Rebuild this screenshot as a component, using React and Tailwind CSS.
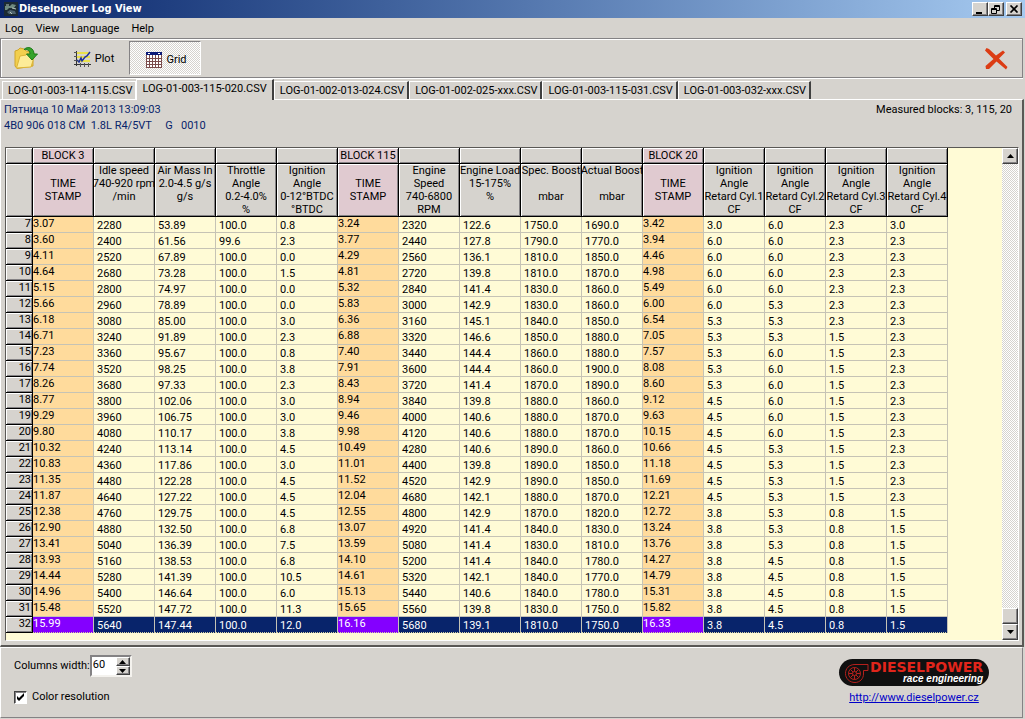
import { useState } from "react";
import clsx from "clsx";

const menuItems = ["Log", "View", "Language", "Help"];

const files = [
  "LOG-01-003-114-115.CSV",
  "LOG-01-003-115-020.CSV",
  "LOG-01-002-013-024.CSV",
  "LOG-01-002-025-xxx.CSV",
  "LOG-01-003-115-031.CSV",
  "LOG-01-003-032-xxx.CSV",
];

const columns = [
  { block: "BLOCK 3", lines: ["", "TIME", "STAMP", ""], stamp: true },
  { lines: ["Idle speed", "740-920 rpm", "/min", ""] },
  { lines: ["Air Mass In", "2.0-4.5 g/s", "g/s", ""] },
  { lines: ["Throttle", "Angle", "0.2-4.0%", "%"] },
  { lines: ["Ignition", "Angle", "0-12°BTDC", "°BTDC"] },
  { block: "BLOCK 115", lines: ["", "TIME", "STAMP", ""], stamp: true },
  { lines: ["Engine", "Speed", "740-6800", "RPM"] },
  { lines: ["Engine Load", "15-175%", "%", ""] },
  { lines: ["Spec. Boost", "", "mbar", ""] },
  { lines: ["Actual Boost", "", "mbar", ""] },
  { block: "BLOCK 20", lines: ["", "TIME", "STAMP", ""], stamp: true },
  { lines: ["Ignition", "Angle", "Retard Cyl.1", "CF"] },
  { lines: ["Ignition", "Angle", "Retard Cyl.2", "CF"] },
  { lines: ["Ignition", "Angle", "Retard Cyl.3", "CF"] },
  { lines: ["Ignition", "Angle", "Retard Cyl.4", "CF"] },
];

const FIRST_ROW = 7;
const SELECTED_ROW = 32;

const rows = `
3.07 2280 53.89 100.0 0.8 3.24 2320 122.6 1750.0 1690.0 3.42 3.0 6.0 2.3 3.0
3.60 2400 61.56 99.6 2.3 3.77 2440 127.8 1790.0 1770.0 3.94 6.0 6.0 2.3 2.3
4.11 2520 67.89 100.0 0.0 4.29 2560 136.1 1810.0 1850.0 4.46 6.0 6.0 2.3 2.3
4.64 2680 73.28 100.0 1.5 4.81 2720 139.8 1810.0 1870.0 4.98 6.0 6.0 2.3 2.3
5.15 2800 74.97 100.0 0.0 5.32 2840 141.4 1830.0 1860.0 5.49 6.0 6.0 2.3 2.3
5.66 2960 78.89 100.0 0.0 5.83 3000 142.9 1830.0 1860.0 6.00 6.0 5.3 2.3 2.3
6.18 3080 85.00 100.0 3.0 6.36 3160 145.1 1840.0 1850.0 6.54 5.3 5.3 2.3 2.3
6.71 3240 91.89 100.0 2.3 6.88 3320 146.6 1850.0 1880.0 7.05 5.3 5.3 1.5 2.3
7.23 3360 95.67 100.0 0.8 7.40 3440 144.4 1860.0 1880.0 7.57 5.3 6.0 1.5 2.3
7.74 3520 98.25 100.0 3.8 7.91 3600 144.4 1860.0 1900.0 8.08 5.3 6.0 1.5 2.3
8.26 3680 97.33 100.0 2.3 8.43 3720 141.4 1870.0 1890.0 8.60 5.3 6.0 1.5 2.3
8.77 3800 102.06 100.0 3.0 8.94 3840 139.8 1880.0 1860.0 9.12 4.5 6.0 1.5 2.3
9.29 3960 106.75 100.0 3.0 9.46 4000 140.6 1880.0 1870.0 9.63 4.5 6.0 1.5 2.3
9.80 4080 110.17 100.0 3.8 9.98 4120 140.6 1880.0 1870.0 10.15 4.5 6.0 1.5 2.3
10.32 4240 113.14 100.0 4.5 10.49 4280 140.6 1890.0 1860.0 10.66 4.5 5.3 1.5 2.3
10.83 4360 117.86 100.0 3.0 11.01 4400 139.8 1890.0 1850.0 11.18 4.5 5.3 1.5 2.3
11.35 4480 122.28 100.0 4.5 11.52 4520 142.9 1890.0 1850.0 11.69 4.5 5.3 1.5 2.3
11.87 4640 127.22 100.0 4.5 12.04 4680 142.1 1880.0 1870.0 12.21 4.5 5.3 1.5 2.3
12.38 4760 129.75 100.0 4.5 12.55 4800 142.9 1870.0 1820.0 12.72 3.8 5.3 0.8 1.5
12.90 4880 132.50 100.0 6.8 13.07 4920 141.4 1840.0 1830.0 13.24 3.8 5.3 0.8 1.5
13.41 5040 136.39 100.0 7.5 13.59 5080 141.4 1830.0 1810.0 13.76 3.8 5.3 0.8 1.5
13.93 5160 138.53 100.0 6.8 14.10 5200 141.4 1840.0 1780.0 14.27 3.8 4.5 0.8 1.5
14.44 5280 141.39 100.0 10.5 14.61 5320 142.1 1840.0 1770.0 14.79 3.8 4.5 0.8 1.5
14.96 5400 146.64 100.0 6.0 15.13 5440 140.6 1840.0 1780.0 15.31 3.8 4.5 0.8 1.5
15.48 5520 147.72 100.0 11.3 15.65 5560 139.8 1830.0 1750.0 15.82 3.8 4.5 0.8 1.5
15.99 5640 147.44 100.0 12.0 16.16 5680 139.1 1810.0 1750.0 16.33 3.8 4.5 0.8 1.5
`
  .trim()
  .split("\n")
  .map((line) => line.split(" "));

const raised =
  "border border-t-white border-l-white border-r-[#404040] border-b-[#404040] bg-[#d6d3ce] shadow-[inset_-1px_-1px_0_#848284]";

const headCell =
  "overflow-hidden border-r border-b border-black p-0 font-normal shadow-[inset_1px_1px_0_#fff,inset_-1px_-1px_0_#848284]";

const dither =
  "bg-[image:repeating-conic-gradient(#ffffff_0_25%,#d6d3ce_0_50%)] bg-[length:2px_2px]";

function AppIcon() {
  return (
    <svg width="14" height="14" viewBox="0 0 14 14" aria-hidden="true">
      <rect width="14" height="14" fill="#1c2b33" />
      <path d="M1 4h5l2-2 4 1-2 3H5L3 8H1z" fill="#6f8a80" />
      <path d="M3 10l3-2 5 1 1 3H5z" fill="#4e6470" />
      <path d="M2 3h3M8 6l4 1M6 10l2 2" stroke="#b6c8bd" />
    </svg>
  );
}

function FolderIcon() {
  return (
    <svg width="25" height="24" viewBox="0 0 25 24" aria-hidden="true">
      <path d="M2 5l3-1 2-2 4 1 2 2 7 1v14L4 22.500 2 20z" fill="#f2cf4e" stroke="#cfa52c" />
      <path d="M3.500 22L7 10l6-1 2-2 7 1-4 13z" fill="#fdec98" stroke="#dcb436" />
      <path d="M11 3.500C15-.5 21 2 21 8h3.500l-5.500 6-5.500-6H17c0-3-2-5-6-4.500z" fill="#35a32a" stroke="#1d7a1a" />
    </svg>
  );
}

function PlotIcon() {
  return (
    <svg width="17" height="16" viewBox="0 0 17 16" aria-hidden="true">
      <path d="M3 2h13M3 6h13M3 10h13" stroke="#e9e04a" strokeWidth="2" />
      <path d="M2.500 0v15M0 13.500h17" stroke="#333" />
      <path d="M0 1.500h3M0 5.500h3M0 9.500h3M6.500 12v4M10.500 12v4M14.500 12v4" stroke="#555" />
      <path d="M3 9l2 2 2-4 1 3 3-4 2-1 3-4" fill="none" stroke="#1c2f9c" strokeWidth="1.500" />
    </svg>
  );
}

function GridIcon() {
  return (
    <svg width="16" height="16" viewBox="0 0 16 16" aria-hidden="true">
      <rect width="16" height="16" fill="#fff" />
      <path
        d="M.5 3v13M3.500 3v13M6.500 3v13M9.500 3v13M12.500 3v13M15.500 3v13M0 6.500h16M0 9.500h16M0 12.500h16M0 15.500h16"
        stroke="#7a4b4b"
      />
      <rect width="16" height="3" fill="#0a1a78" />
      <path d="M2 1.500h2M12 1.500h2" stroke="#fff" />
    </svg>
  );
}

function ExitIcon() {
  return (
    <svg width="24" height="24" viewBox="0 0 24 24" aria-hidden="true">
      <path
        d="M1 3.500L2.500 1 5 2l7 6.500L19 3.500 21 5.500 15 11.500 23.500 20 22 22.500 12.500 14.500 5 22H2l-.5-3L9.500 12z"
        fill="#dc3c14"
      />
    </svg>
  );
}

function Arrow({ up }) {
  return (
    <svg width="7" height="4" viewBox="0 0 7 4" aria-hidden="true">
      <path d={up ? "M0 4L3.500 0 7 4z" : "M0 0h7L3.500 4z"} fill="#000" />
    </svg>
  );
}

function TitleBar() {
  return (
    <header className="flex h-[18px] items-center bg-linear-to-r from-[#0a246a] to-[#a6caf0] pr-[3px] pl-1">
      <AppIcon />
      <h1 className="ml-px flex-1 font-['DejaVu_Sans_Condensed','Noto_Sans',sans-serif] text-[11px] font-bold text-white">
        Dieselpower Log View
      </h1>
      <button aria-label="Minimize" className={clsx("flex h-[14px] w-4 items-center justify-center", raised)}>
        <svg width="10" height="9" viewBox="0 0 10 9">
          <path d="M1 7h6v2H1z" />
        </svg>
      </button>
      <button aria-label="Restore" className={clsx("mr-[2px] flex h-[14px] w-4 items-center justify-center", raised)}>
        <svg width="10" height="9" viewBox="0 0 10 9" fill="none" stroke="#000">
          <path d="M3.500 3V.5h5v5H6M3 1.500h6M.5 3.500h5v5h-5zM0 4.500h6" />
        </svg>
      </button>
      <button aria-label="Close" className={clsx("flex h-[14px] w-4 items-center justify-center", raised)}>
        <svg width="10" height="8" viewBox="0 0 10 8" stroke="#000" strokeWidth="1.700">
          <path d="M1.500.5l7 7M8.500.5l-7 7" />
        </svg>
      </button>
    </header>
  );
}

function Toolbar() {
  return (
    <div className="mr-[2px] flex h-10 items-center border border-[#848284] pl-2 shadow-[inset_1px_1px_0_#fff,0_1px_0_#fff]">
      <button aria-label="Open" className="flex h-[34px] w-12 items-center pl-1">
        <FolderIcon />
      </button>
      <button className="flex h-[34px] w-[72px] items-center justify-center gap-1 pt-[2px] pl-[2px]">
        <PlotIcon />
        Plot
      </button>
      <button
        aria-pressed="true"
        className={clsx(
          "flex h-[34px] w-[72px] items-center justify-center gap-1 border border-t-[#848284] border-l-[#848284] border-r-white border-b-white pt-[3px] pl-[3px]",
          dither
        )}
      >
        <GridIcon />
        Grid
      </button>
      <button aria-label="Exit" className="mr-[14px] ml-auto pt-[2px]">
        <ExitIcon />
      </button>
    </div>
  );
}

function Tabs({ active, onSelect }) {
  return (
    <div role="tablist" className="mt-px flex items-end pr-[2px] pl-[2px]">
      {files.map((file, i) => (
        <button
          key={file}
          role="tab"
          aria-selected={i === active}
          onClick={() => onSelect(i)}
          className={clsx(
            "border-t border-l border-white whitespace-nowrap",
            i === active ? "z-10 -mb-px h-[21px] bg-[#d6d3ce] px-[5px] pb-[2px]" : "h-[18px] pr-[3px] pl-[5px]",
            i === active - 1 ? "border-r" : "border-r-2 border-r-[#404040]"
          )}
        >
          {file}
        </button>
      ))}
    </div>
  );
}

function LogTable({ columnWidth }) {
  return (
    <table className="table-fixed border-separate border-spacing-0 self-start" style={{ width: 27 + columns.length * (columnWidth + 1) }}>
      <colgroup>
        <col className="w-[27px]" />
        {columns.map((_, i) => (
          <col key={i} style={{ width: columnWidth + 1 }} />
        ))}
      </colgroup>
      <thead className="bg-[#d6d3ce] leading-[13px]">
        <tr className="h-4">
          <th className={headCell} />
          {columns.map((col, i) => (
            <th key={i} className={clsx(headCell, "whitespace-nowrap", col.stamp && "bg-[#e0cad0]")}>
              {col.block}
            </th>
          ))}
        </tr>
        <tr className="h-[53px]">
          <th className={headCell} />
          {columns.map((col, i) => (
            <th key={i} className={clsx(headCell, "align-top whitespace-nowrap", col.stamp && "bg-[#e0cad0]")}>
              {col.lines.map((line, n) => (
                <div key={n} className="flex h-[13px] justify-center">
                  {line}
                </div>
              ))}
            </th>
          ))}
        </tr>
      </thead>
      <tbody className="leading-[13px]">
        {rows.map((row, r) => {
          const number = FIRST_ROW + r;
          const selected = number === SELECTED_ROW;
          return (
            <tr key={number} className="h-4">
              <th className={clsx(headCell, "bg-[#d6d3ce] pr-px text-right align-top")}>{number}</th>
              {row.map((value, c) => {
                const stamp = columns[c].stamp;
                return (
                  <td
                    key={c}
                    className={clsx(
                      "border-r border-b p-0",
                      stamp ? "pb-[2px] align-top" : "pt-[2px] pl-[3px]",
                      !selected && "border-[#c6c3b5]",
                      !selected && (stamp ? "bg-[#ffdb9c]" : "bg-[#fffbd6]"),
                      selected && "border-r-[#c6c3b5] border-b-[#d6d3a0] [border-bottom-style:dotted] text-white",
                      selected && (stamp ? "bg-[#8400ff]" : "bg-[#08246b]")
                    )}
                  >
                    {value}
                  </td>
                );
              })}
            </tr>
          );
        })}
      </tbody>
    </table>
  );
}

function ScrollBar() {
  return (
    <div className={clsx("flex w-4 shrink-0 flex-col", dither)}>
      <button aria-label="Scroll up" className={clsx("flex h-4 items-center justify-center", raised)}>
        <Arrow up />
      </button>
      <div className="flex-1" />
      <div className={clsx("h-4", raised)} />
      <button aria-label="Scroll down" className={clsx("flex h-4 items-center justify-center", raised)}>
        <Arrow />
      </button>
    </div>
  );
}

function Logo() {
  return (
    <div className="flex h-[27px] w-[150px] items-center justify-between rounded-full bg-[#101010] pr-[6px] pl-[5px]">
      <svg width="25" height="22" viewBox="0 0 25 22" fill="none" stroke="#b5201c" aria-hidden="true">
        <path d="M24 2.500H11C5 2.500 1.500 6.500 1.500 11.500S5.500 20.500 11 20.500c5 0 8.500-4 8.500-8.500V8.500H24z" />
        <circle cx="10.500" cy="11.500" r="6" />
        <circle cx="10.500" cy="11.500" r="2" />
        <path d="M10.500 5.500v4M10.500 13.500v4M4.500 11.500h4M12.500 11.500h4M6.500 7.500l2.500 2.500M12 13l2.500 2.500M14.500 7.500L12 10M9 13l-2.500 2.500" />
      </svg>
      <div className="flex flex-col items-end font-bold">
        <span className="font-['DejaVu_Sans',sans-serif] text-[14px] leading-[13px] text-[#e1251b]">DIESELPOWER</span>
        <span className="font-['Liberation_Sans',sans-serif] text-[10px] leading-[10px] text-white italic">
          race engineering
        </span>
      </div>
    </div>
  );
}

function Footer({ columnWidth, onColumnWidth }) {
  return (
    <footer className="mr-[2px] flex h-[71px] justify-between border border-t-white border-r-[#848284] border-b-[#848284] border-l-white pr-[33px] pl-[13px]">
      <div className="flex flex-col gap-3 pt-[7px]">
        <div className="flex items-center">
          <label htmlFor="columns-width">Columns width:</label>
          <div className="flex h-[22px] w-[42px] border-2 border-t-[#848284] border-r-[#f4f2ee] border-b-[#f4f2ee] border-l-[#848284] bg-white">
            <input
              id="columns-width"
              value={columnWidth}
              onChange={(e) => onColumnWidth(Number(e.target.value) || 0)}
              className="w-6 pb-[2px] pl-px outline-none"
            />
            <div className="flex w-[14px] flex-col">
              <button
                aria-label="Wider"
                onClick={() => onColumnWidth(columnWidth + 1)}
                className={clsx("flex h-[9px] items-center justify-center", raised)}
              >
                <Arrow up />
              </button>
              <button
                aria-label="Narrower"
                onClick={() => onColumnWidth(columnWidth - 1)}
                className={clsx("flex h-[9px] items-center justify-center", raised)}
              >
                <Arrow />
              </button>
            </div>
          </div>
        </div>
        <label className="flex items-center gap-[5px]">
          <span className="grid place-items-center *:col-start-1 *:row-start-1">
            <input
              type="checkbox"
              defaultChecked
              className="peer size-[13px] appearance-none border border-t-[#404040] border-r-white border-b-white border-l-[#404040] bg-white shadow-[inset_1px_1px_0_#848284]"
            />
            <svg width="9" height="9" viewBox="0 0 9 9" className="pointer-events-none invisible peer-checked:visible">
              <path d="M1 3v3l2 2 5-5V0L3 5z" />
            </svg>
          </span>
          Color resolution
        </label>
      </div>
      <div className="flex flex-col items-center gap-1 pt-[11px]">
        <Logo />
        <a href="http://www.dieselpower.cz" className="text-[#0000c8] underline">
          http://www.dieselpower.cz
        </a>
      </div>
    </footer>
  );
}

export default function App() {
  const [activeTab, setActiveTab] = useState(1);
  const [columnWidth, setColumnWidth] = useState(60);

  return (
    <div className="flex h-screen flex-col bg-[#d6d3ce] pb-px font-[Roboto,'Liberation_Sans',sans-serif] text-[11px] leading-4 text-black">
      <TitleBar />
      <nav className="flex h-5 items-center gap-3 pt-[2px] pl-[5px]">
        {menuItems.map((item) => (
          <button key={item}>{item}</button>
        ))}
      </nav>
      <Toolbar />
      <Tabs active={activeTab} onSelect={setActiveTab} />
      <main className="mr-px flex min-h-0 flex-1 flex-col border-t border-r-2 border-b-2 border-l border-t-white border-r-[#5a5855] border-b-[#5a5855] border-l-white pr-[3px] pb-1 pl-[3px]">
        <div className="flex h-[47px] shrink-0 justify-between pt-[2px] pr-[7px]">
          <p className="whitespace-pre text-[#08246b]">
            {"Пятница 10 Май 2013 13:09:03\n4B0 906 018 CM  1.8L R4/5VT     G   0010"}
          </p>
          <p>Measured blocks: 3, 115, 20</p>
        </div>
        <div className="ml-px flex min-h-0 flex-1 justify-between overflow-hidden border border-t-[#5a5855] border-r-white border-b-white border-l-[#5a5855] bg-[#fffbd6]">
          <LogTable columnWidth={columnWidth} />
          <ScrollBar />
        </div>
      </main>
      <Footer columnWidth={columnWidth} onColumnWidth={setColumnWidth} />
    </div>
  );
}
